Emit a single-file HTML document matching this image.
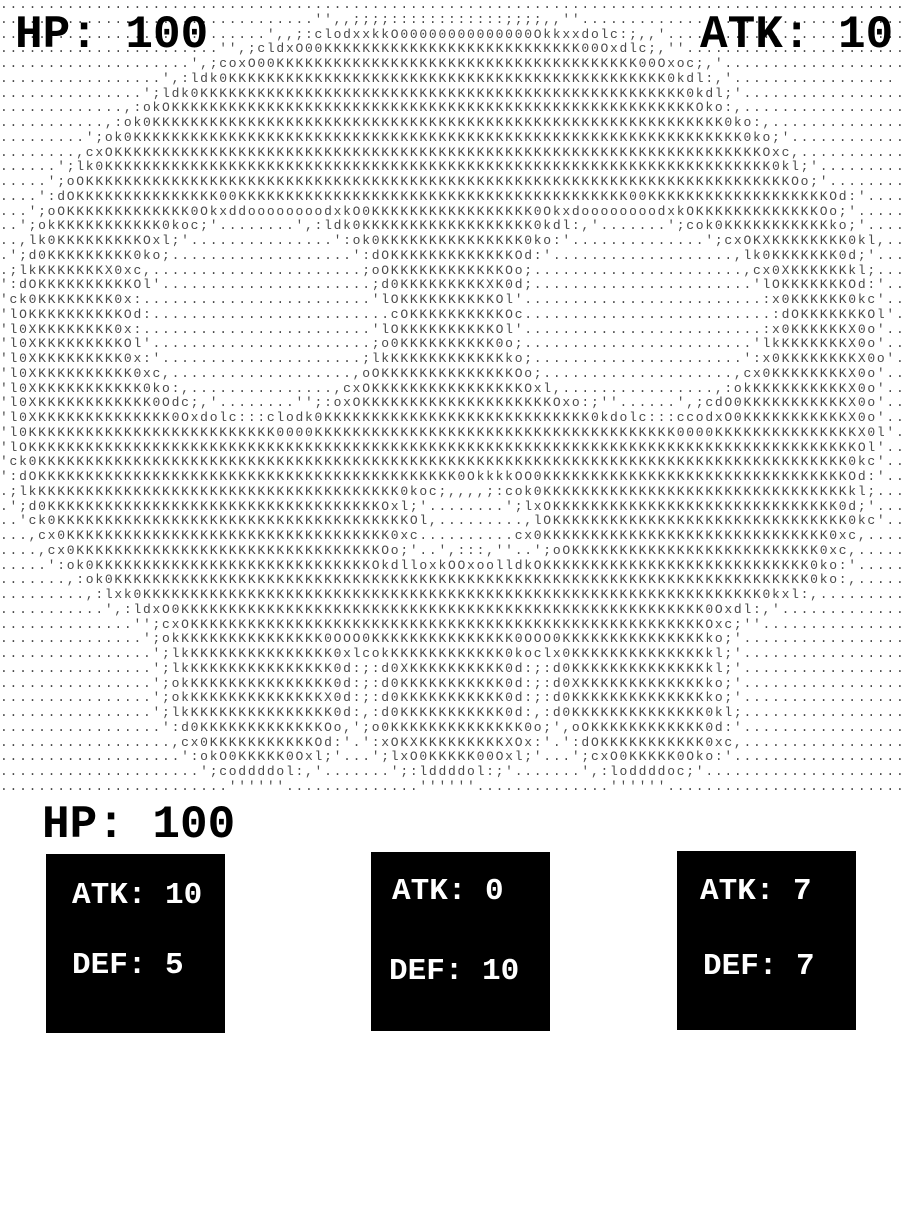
<!DOCTYPE html>
<html><head><meta charset="utf-8">
<style>
html,body{margin:0;padding:0;background:#fff;}
body{width:905px;height:1228px;position:relative;overflow:hidden;}
pre.art{position:absolute;left:0;top:-2px;margin:0;width:905px;overflow:hidden;
font-family:"Liberation Mono","DejaVu Sans Mono",monospace;font-size:13px;letter-spacing:1.73px;line-height:14.75px;color:#4a4a4a;white-space:pre;}
.big{position:absolute;font-family:"Liberation Mono","DejaVu Sans Mono",monospace;font-weight:bold;font-size:46px;line-height:1;color:#000;white-space:pre;}
.card{position:absolute;background:#000;width:179px;height:179px;}
.ct{position:absolute;font-family:"Liberation Mono","DejaVu Sans Mono",monospace;font-weight:bold;font-size:31px;line-height:1;color:#fff;white-space:pre;}
</style></head><body>
<pre class="art">...............................................................................................
.................................'',,;;;;::::::::::::;;;;,,''..................................
............................',,;:clodxxkkO00000000000000Okkxxdolc:;,,'.........................
.......................'',;cldxO00KKKKKKKKKKKKKKKKKKKKKKKKKKK00Oxdlc;,''.......................
....................',;coxO00KKKKKKKKKKKKKKKKKKKKKKKKKKKKKKKKKKKKKK00Oxoc;,'....................
.................',:ldk0KKKKKKKKKKKKKKKKKKKKKKKKKKKKKKKKKKKKKKKKKKKKKK0kdl:,'.................
...............';ldk0KKKKKKKKKKKKKKKKKKKKKKKKKKKKKKKKKKKKKKKKKKKKKKKKKKK0kdl;'.................
.............,:okOKKKKKKKKKKKKKKKKKKKKKKKKKKKKKKKKKKKKKKKKKKKKKKKKKKKKKKKOko:,.................
...........,:ok0KKKKKKKKKKKKKKKKKKKKKKKKKKKKKKKKKKKKKKKKKKKKKKKKKKKKKKKKKKKK0ko:,................
.........';ok0KKKKKKKKKKKKKKKKKKKKKKKKKKKKKKKKKKKKKKKKKKKKKKKKKKKKKKKKKKKKKKKK0ko;'..............
........,cxOKKKKKKKKKKKKKKKKKKKKKKKKKKKKKKKKKKKKKKKKKKKKKKKKKKKKKKKKKKKKKKKKKKKKOxc,.............
......';lk0KKKKKKKKKKKKKKKKKKKKKKKKKKKKKKKKKKKKKKKKKKKKKKKKKKKKKKKKKKKKKKKKKKKKKK0kl;'...........
.....';oOKKKKKKKKKKKKKKKKKKKKKKKKKKKKKKKKKKKKKKKKKKKKKKKKKKKKKKKKKKKKKKKKKKKKKKKKKKOo;'..........
....':dOKKKKKKKKKKKKKKK00KKKKKKKKKKKKKKKKKKKKKKKKKKKKKKKKKKKKKKKKK00KKKKKKKKKKKKKKKKKKKOd:'.........
...';oOKKKKKKKKKKKKK0OkxddoooooooodxkO0KKKKKKKKKKKKKKKKK0OkxdoooooooodxkOKKKKKKKKKKKKKOo;'...........
..';okKKKKKKKKKKK0koc;'........',:ldk0KKKKKKKKKKKKKKKKKK0kdl:,'.......';cok0KKKKKKKKKKKko;'....
..,lk0KKKKKKKKKOxl;'...............':ok0KKKKKKKKKKKKKKK0ko:'..............';cxOKXKKKKKKKK0kl,..
.';d0KKKKKKKKK0ko;...................':dOKKKKKKKKKKKKKOd:'...................,lk0KKKKKKK0d;'...
.;lkKKKKKKKX0xc,......................;oOKKKKKKKKKKKKOo;......................,cx0XKKKKKKkl;...
':dOKKKKKKKKKKOl'......................;d0KKKKKKKKKXK0d;.......................'lOKKKKKKKOd:'..
'ck0KKKKKKKK0x:........................'lOKKKKKKKKKKOl'.........................:x0KKKKKK0kc'..
'lOKKKKKKKKKKOd:.........................cOKKKKKKKKKKOc..........................:dOKKKKKKKOl'..
'l0XKKKKKKKK0x:........................'lOKKKKKKKKKKOl'.........................:x0KKKKKKX0o'..
'l0XKKKKKKKKKOl'.......................;o0KKKKKKKKKK0o;........................'lkKKKKKKKX0o'..
'l0XKKKKKKKKK0x:'.....................;lkKKKKKKKKKKKKko;......................':x0KKKKKKKKX0o'..
'l0XKKKKKKKKKK0xc,...................,oOKKKKKKKKKKKKKKOo;....................,cx0KKKKKKKKX0o'..
'l0XKKKKKKKKKKK0ko:,...............,cxOKKKKKKKKKKKKKKKKOxl,................,:okKKKKKKKKKKX0o'..
'l0XKKKKKKKKKKKK0Odc;,'........'';:oxOKKKKKKKKKKKKKKKKKKKKOxo:;''......',;cdO0KKKKKKKKKKKX0o'..
'l0XKKKKKKKKKKKKKK0Oxdolc:::clodk0KKKKKKKKKKKKKKKKKKKKKKKKKKKK0kdolc:::ccodxO0KKKKKKKKKKKX0o'..
'l0KKKKKKKKKKKKKKKKKKKKKKKKKK0000KKKKKKKKKKKKKKKKKKKKKKKKKKKKKKKKKKKKKK0000KKKKKKKKKKKKKKKX0l'.
'lOKKKKKKKKKKKKKKKKKKKKKKKKKKKKKKKKKKKKKKKKKKKKKKKKKKKKKKKKKKKKKKKKKKKKKKKKKKKKKKKKKKKKKKKOl'..
'ck0KKKKKKKKKKKKKKKKKKKKKKKKKKKKKKKKKKKKKKKKKKKKKKKKKKKKKKKKKKKKKKKKKKKKKKKKKKKKKKKKKKKKK0kc'..
':dOKKKKKKKKKKKKKKKKKKKKKKKKKKKKKKKKKKKKKKKKKKKK0OkkkkOO0KKKKKKKKKKKKKKKKKKKKKKKKKKKKKKKKOd:'..
.;lkKKKKKKKKKKKKKKKKKKKKKKKKKKKKKKKKKKKKKK0koc;,,,,;:cok0KKKKKKKKKKKKKKKKKKKKKKKKKKKKKKKKkl;...
.';d0KKKKKKKKKKKKKKKKKKKKKKKKKKKKKKKKKKKOxl;'........';lxOKKKKKKKKKKKKKKKKKKKKKKKKKKKKKK0d;'...
..'ck0KKKKKKKKKKKKKKKKKKKKKKKKKKKKKKKKKKKKKOl,.........,lOKKKKKKKKKKKKKKKKKKKKKKKKKKKKKKK0kc'...
...,cx0KKKKKKKKKKKKKKKKKKKKKKKKKKKKKKKKKK0xc..........cx0KKKKKKKKKKKKKKKKKKKKKKKKKKKKKK0xc,....
....,cx0KKKKKKKKKKKKKKKKKKKKKKKKKKKKKKKKOo;'..',:::,''..';oOKKKKKKKKKKKKKKKKKKKKKKKKKK0xc,.....
.....':ok0KKKKKKKKKKKKKKKKKKKKKKKKKKKKKOkdlloxkOOxoolldkOKKKKKKKKKKKKKKKKKKKKKKKKKKKK0ko:'.....
.......,:ok0KKKKKKKKKKKKKKKKKKKKKKKKKKKKKKKKKKKKKKKKKKKKKKKKKKKKKKKKKKKKKKKKKKKKKKKKK0ko:,.......
.........,:lxk0KKKKKKKKKKKKKKKKKKKKKKKKKKKKKKKKKKKKKKKKKKKKKKKKKKKKKKKKKKKKKKKKK0kxl:,............
...........',:ldxO0KKKKKKKKKKKKKKKKKKKKKKKKKKKKKKKKKKKKKKKKKKKKKKKKKKKKKKK0Oxdl:,'................
..............'';cxOKKKKKKKKKKKKKKKKKKKKKKKKKKKKKKKKKKKKKKKKKKKKKKKKKKKKKKOxc;''...............
...............';okKKKKKKKKKKKKKKK0OOO0KKKKKKKKKKKKKKK0OOO0KKKKKKKKKKKKKKKko;'.................
................';lkKKKKKKKKKKKKKKK0xlcokKKKKKKKKKKKK0koclx0KKKKKKKKKKKKKKkl;'.................
................';lkKKKKKKKKKKKKKKK0d:;:d0XKKKKKKKKKK0d:;:d0KKKKKKKKKKKKKKkl;'.................
................';okKKKKKKKKKKKKKKK0d:;:d0KKKKKKKKKKK0d:;:d0XKKKKKKKKKKKKKko;'.................
................';okKKKKKKKKKKKKKKX0d:;:d0KKKKKKKKKKK0d:;:d0KKKKKKKKKKKKKKko;'.................
................';lkKKKKKKKKKKKKKKK0d:,:d0KKKKKKKKKKK0d:,:d0KKKKKKKKKKKKKK0kl;.................
.................':d0KKKKKKKKKKKKKOo,';o0KKKKKKKKKKKKKK0o;',oOKKKKKKKKKKKK0d:'.................
..................,cx0KKKKKKKKKKKOd:'.':xOKXKKKKKKKKKXOx:'.':dOKKKKKKKKKKK0xc,.................
...................':okO0KKKKK0Oxl;'...';lxO0KKKKK00Oxl;'...';cxO0KKKKK0Oko:'..................
.....................';coddddol:,'.......';:lddddol:;'.......',:loddddoc;'.....................
........................''''''..............''''''..............''''''.........................</pre>
<div class="big" style="left:15px;top:12px;">HP: 100</div>
<div class="big" style="left:700px;top:12px;">ATK: 10</div>
<div class="big" style="left:42px;top:802px;">HP: 100</div>
<div class="card" style="left:46px;top:854px;"></div>
<div class="card" style="left:371px;top:852px;"></div>
<div class="card" style="left:677px;top:851px;"></div>
<div class="ct" style="left:72px;top:880px;">ATK: 10</div>
<div class="ct" style="left:72px;top:950px;">DEF: 5</div>
<div class="ct" style="left:392px;top:876px;">ATK: 0</div>
<div class="ct" style="left:389px;top:956px;">DEF: 10</div>
<div class="ct" style="left:700px;top:876px;">ATK: 7</div>
<div class="ct" style="left:703px;top:951px;">DEF: 7</div>
</body></html>
